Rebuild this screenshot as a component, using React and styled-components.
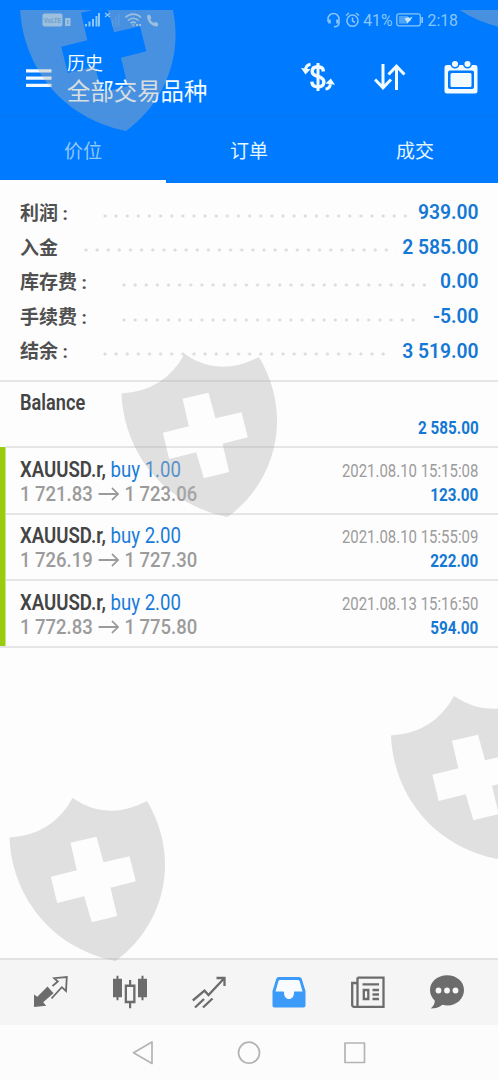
import React from 'react';
import styled, { createGlobalStyle } from 'styled-components';

const GlobalStyle = createGlobalStyle`
  * {
    box-sizing: border-box;
  }
  body {
    margin: 0;
    overflow: hidden;
    background: #fdfdfd;
    font-family: Roboto, 'Noto Sans CJK SC', sans-serif;
  }
`;

const Screen = styled.div`
  position: relative;
  display: flex;
  flex-direction: column;
  width: 498px;
  height: 1080px;
  overflow: hidden;
  background: #fdfdfd;
`;

const Header = styled.header`
  height: 183px;
  background: #007aff;
  color: #f2fbff;
`;

const StatusBar = styled.div`
  display: flex;
  justify-content: space-between;
  height: 38px;
  padding: 10px 40px 0 42px;
  color: #8ac6f7;
`;

const StatusGroup = styled.div`
  display: flex;
  align-items: center;
  height: 20px;
  gap: ${props => props.gap};
`;

const StatusText = styled.span`
  font-size: 15.8px;
  line-height: 21px;
`;

const Toolbar = styled.div`
  display: flex;
  align-items: center;
  height: 79px;
  padding: 3px 20px 0 26px;
  border-bottom: 1px solid #0874ee;
`;

const Titles = styled.div`
  flex: 1;
  margin-left: 15px;
`;

const Title = styled.div`
  height: 26px;
  font-size: 18px;
  line-height: 26px;
`;

const Subtitle = styled.div`
  height: 30px;
  font-size: 23.4px;
  line-height: 31px;
`;

const Actions = styled.div`
  display: flex;
  align-items: center;
  gap: 38.5px;
  padding-bottom: 3px;
`;

const Tabs = styled.nav`
  display: flex;
  height: 66px;
`;

const Tab = styled.div`
  flex: 1;
  padding-top: 4px;
  border-bottom: 3px solid ${props => (props.on ? '#fff' : 'transparent')};
  color: ${props => (props.on ? '#8fc6fb' : '#e4f6ff')};
  font-size: 19px;
  line-height: 62px;
  text-align: center;
`;

const Summary = styled.section`
  height: 196.5px;
  padding: 12.5px 19.5px 0 20px;
`;

const SummaryRow = styled.div`
  display: flex;
  align-items: center;
  height: 34.6px;
  font-size: 19.3px;
`;

const Label = styled.span`
  margin-right: 26px;
  color: #505050;
  font-family: 'Noto Sans CJK SC', sans-serif;
  font-size: 19px;
  font-weight: 700;
  line-height: 34px;
`;

const Colon = styled.span`
  display: inline-block;
  width: 19px;
  padding-left: 4.5px;
  font-family: Roboto, sans-serif;
`;

const Leader = styled.span`
  width: ${props => props.dots * 11.13}px;
  height: 4px;
  margin-top: 6px;
  background: radial-gradient(circle at 2px 2px, #dcdcdc 1.1px, transparent 2px);
  background-size: 11.13px 4px;
`;

const Value = styled.span`
  flex: 1;
  color: #1478d4;
  font-weight: 600;
  text-align: right;
  white-space: nowrap;
`;

const Deals = styled.section`
  flex: 1;
`;

const Deal = styled.div`
  display: flex;
  justify-content: space-between;
  height: 66.5px;
  padding: 9px 19.5px 0 20px;
  border-top: 2px solid #e5e5e5;
`;

const MarkedDeals = styled.div`
  border-bottom: 2px solid #e5e5e5;
  background: linear-gradient(#99cc0c, #99cc0c) no-repeat 0 1px / 5.5px 100%;

  ${Deal} {
    margin-left: 5.5px;
    padding-left: 14.5px;
  }
`;

const Column = styled.div`
  width: ${props => (props.right ? '160px' : '220px')};
  display: flex;
  flex-direction: column;
  align-items: ${props => (props.right ? 'flex-end' : 'flex-start')};
  padding-top: ${props => (props.right ? '1.5px' : '0.5px')};
`;

const Condensed = styled.div`
  height: ${props => props.height || 24}px;
  line-height: ${props => props.height || 24}px;
  white-space: nowrap;
  transform: scaleX(${props => props.squeeze || 0.87});
  transform-origin: ${props => (props.right ? 'right' : 'left')} center;
`;

const Symbol = styled(Condensed)`
  color: #444;
  font-size: 21.5px;
  font-weight: 600;
`;

const Side = styled.span`
  color: #197bd9;
  font-weight: 400;
`;

const Prices = styled(Condensed)`
  display: flex;
  align-items: center;
  gap: 6px;
  color: #9b9b9b;
  font-size: 21px;
  font-weight: 500;
`;

const Time = styled(Condensed)`
  color: #9c9c9c;
  font-size: 18px;
`;

const Profit = styled(Condensed)`
  color: #1478d4;
  font-size: 17.5px;
  font-weight: 700;
`;

const BottomNav = styled.nav`
  display: flex;
  height: 67px;
  padding: 0 11.5px 2px;
  border-top: 2px solid #e2e2e2;
  background: #f5f5f5;
`;

const NavItem = styled.div`
  flex: 1;
  display: flex;
  align-items: center;
  justify-content: center;
  color: ${props => (props.on ? '#3c9bf8' : '#6c6c6c')};
`;

const SystemBar = styled.div`
  display: flex;
  justify-content: center;
  gap: 81px;
  height: 55px;
  padding-top: 15px;
  background: #fcfcfc;
`;

const Watermark = styled.svg`
  position: absolute;
  top: 10px;
  left: 0;
  pointer-events: none;
`;

const totals = [
  { label: '利润', colon: true, dots: 28, value: '939.00' },
  { label: '入金', colon: false, dots: 28, value: '2 585.00' },
  { label: '库存费', colon: true, dots: 28, value: '0.00' },
  { label: '手续费', colon: true, dots: 27, value: '-5.00' },
  { label: '结余', colon: true, dots: 26, value: '3 519.00' },
];

const deals = [
  { id: 1, volume: '1.00', open: '1 721.83', close: '1 723.06', time: '2021.08.10 15:15:08', profit: '123.00' },
  { id: 2, volume: '2.00', open: '1 726.19', close: '1 727.30', time: '2021.08.10 15:55:09', profit: '222.00' },
  { id: 3, volume: '2.00', open: '1 772.83', close: '1 775.80', time: '2021.08.13 15:16:50', profit: '594.00' },
];

const shields = [[20, -43], [401, -145], [121.5, 343], [391, 685], [9.5, 787]];

const PhoneSignals = () => (
  <svg width="118" height="20" fill="currentColor">
    <rect x="0.5" y="3.5" width="20" height="13" rx="2" />
    <text x="2" y="13" fontSize="8" fontWeight="700" textLength="17" lengthAdjust="spacingAndGlyphs" fill="#4293e5">VoLTE</text>
    <path d="M23 8h5.500v8H23z" />
    <path d="M25.200 10h1.200v4h-1.200z" fill="#4a94df" />
    <path d="M43 14h2v2.500h-2zM46.500 11.500h2v5h-2zM50 9h2v7.500h-2zM53.500 6h2v10.500h-2zM56 3h2v13.500h-2z" />
    <path d="M63 3l5 4M68 3l-5 4" stroke="currentColor" strokeWidth="1.300" />
    <path d="M70 10h1.500v6.500H70zM73 7h1.500v9.500H73zM76 4h1.500v12.500H76z" opacity="0.2" />
    <g fill="none" stroke="currentColor" strokeWidth="1.700">
      <path d="M83.500 7.500c4.500-4.500 11-4.500 15.500 0M86 10.500c3-3 7.500-3 10.500 0M88.700 13.200c1.500-1.400 3.500-1.400 5 0" />
    </g>
    <path d="M89.500 14.500h3.500l-1.800 2zM94 14h2v2h-2zM97 14h2v2h-2z" />
    <path d="M105 5.500l2.500-1 2 3.300-1.300 1.500c.8 1.800 2 3 3.700 3.800l1.500-1.400 3 2-1 2.800c-5.500.5-10.500-5-10.400-11z" />
  </svg>
);

const Headset = () => (
  <svg width="15" height="16" viewBox="0 0 15 16" fill="none" stroke="currentColor" strokeWidth="1.500">
    <path d="M2 10V7a5.500 5.500 0 0 1 11 0v4c0 2.500-2 3.700-5 3.700" />
    <path d="M3.500 7.500v4M11.500 7.500v4" strokeWidth="2.500" />
  </svg>
);

const Alarm = () => (
  <svg width="15" height="16" viewBox="0 0 15 16" fill="none" stroke="currentColor" strokeWidth="1.500">
    <circle cx="7.500" cy="8.700" r="5.600" />
    <path d="M7.500 5.500v3.500l2.500 1.500M1 3.500L4 1M14 3.500L11 1" />
  </svg>
);

const Battery = () => (
  <svg width="28" height="14" viewBox="0 0 28 14">
    <rect x="0.800" y="0.800" width="23.500" height="12" rx="2" fill="none" stroke="currentColor" strokeWidth="1.300" />
    <rect x="3" y="3" width="9" height="7.600" fill="currentColor" opacity="0.550" />
    <path d="M25.300 4h1.700v6h-1.700z" fill="currentColor" />
    <path d="M8.500 5.500l4-1.500 1 1.200L16.500 3.500l-2 4-3.500 3-.5-2.200z" fill="#c8e7fb" />
  </svg>
);

const MenuIcon = () => (
  <svg width="26" height="20" fill="currentColor">
    <path d="M0 0.300h25.500v3.200H0zM0 7.500h25.500v3.200H0zM0 14.700h25.500v3.200H0z" />
  </svg>
);

const CurrencyIcon = () => (
  <svg width="34" height="30" viewBox="0 0 34 30" fill="none" stroke="currentColor">
    <path d="M22.500 9.500c-.3-3.200-2.400-4.800-5.600-4.800-3.500 0-5.700 1.800-5.700 4.700 0 6.500 11.700 3.600 11.700 10.500 0 3.200-2.500 5-6 5-3.600 0-5.900-1.900-6.100-5.200" strokeWidth="3.400" />
    <path d="M17 1v28" strokeWidth="3" />
    <path d="M9.500 2.300C6.500 2.800 5 4.500 4.600 7M24.500 27c3-.4 4.500-2 4.900-4.800" strokeWidth="3" />
    <path d="M0 6l9.500 1.200-5 5.300zM34 22.800l-9.500-1.200 5.300-5z" fill="currentColor" stroke="none" />
  </svg>
);

const SortIcon = () => (
  <svg width="32" height="28" viewBox="0 0 32 28" fill="none" stroke="currentColor" strokeWidth="3">
    <path d="M9 1v24M1 16.500l8 8.300 8-8.300M22.500 27V3M14.500 11.500l8-8.300 8 8.300" />
  </svg>
);

const CalendarIcon = () => (
  <svg width="34" height="34" viewBox="0 0 34 34" fill="currentColor">
    <path fillRule="evenodd" d="M3 5h28a2.500 2.500 0 0 1 2.500 2.500V31A2.500 2.500 0 0 1 31 33.500H3A2.500 2.500 0 0 1 .5 31V7.500A2.500 2.500 0 0 1 3 5zM6 10.500a2 2 0 0 0-2 2v14.500a2 2 0 0 0 2 2h22a2 2 0 0 0 2-2V12.500a2 2 0 0 0-2-2z" />
    <rect x="6.500" y="13" width="21" height="14" rx="1.500" />
    <g stroke="#007aff" strokeWidth="1.500">
      <circle cx="11" cy="4" r="3.800" />
      <circle cx="23.500" cy="4" r="3.800" />
    </g>
  </svg>
);

const QuotesIcon = () => (
  <svg width="34" height="34" viewBox="0 0 34 34" fill="none" stroke="currentColor" strokeWidth="1.800">
    <path d="M0 19.500l3.300 2.300 10.200-10.300 6 6.700-10.300 9 3 3.600L0 32z" fill="currentColor" stroke="none" />
    <path d="M18.500 11l5.300-4.500-3.600-3.300L32.800 2l-.8 14-4.200-3.800L17.500 23.500" />
  </svg>
);

const CandlesIcon = () => (
  <svg width="34" height="34" viewBox="0 0 34 34" fill="currentColor">
    <path d="M3.500.8h2v3H9v18.500H5.500v3h-2v-3H0V3.800h3.500zM28.500.8h2v3H34v18.500h-3.500v3h-2v-3H25V3.800h3.500z" />
    <path fillRule="evenodd" d="M16 5h2.200v4.500h4.300v18.800h-4.300v5H16v-5h-4.300V9.500H16zM14 12v13.800h6.200V12z" />
  </svg>
);

const TrendIcon = () => (
  <svg width="34" height="34" viewBox="0 0 34 34" fill="none" stroke="currentColor" strokeWidth="2.300">
    <path d="M.8 25.500l11.700-9.800 4 4.300L32 3.500M24.500 3h8v8M3 32.500l9-8.500M11 32.500l9.500-9" />
  </svg>
);

const InboxIcon = () => (
  <svg width="34" height="34" viewBox="0 0 34 34">
    <path d="M7 2h20c1.500 0 2.300.7 2.800 2L33.500 16v14.500a2 2 0 0 1-2 2h-29a2 2 0 0 1-2-2V16L4.200 4C4.700 2.700 5.500 2 7 2z" fill="currentColor" />
    <path d="M8 5h18a1.500 1.500 0 0 1 1.500 1l3 10.500H23c-.8 0-1 .5-1 1.200 0 3.700-2 6.300-5 6.300s-5-2.600-5-6.300c0-.7-.2-1.200-1-1.200H3.500L6.500 6A1.500 1.500 0 0 1 8 5z" fill="#f8fbff" />
  </svg>
);

const NewsIcon = () => (
  <svg width="34" height="34" viewBox="0 0 34 34" fill="none" stroke="currentColor" strokeWidth="2.300">
    <path d="M6.500 2.600h26v29.200H3a1.800 1.800 0 0 1-1.800-1.800V8h4.500M6.500 2.600v29" />
    <path d="M11.500 9.300h16.500M21.500 15h6.500M21.500 19.500h6.500M21.500 24h6.500M12.800 15h4.500v9h-4.500z" />
  </svg>
);

const ChatIcon = () => (
  <svg width="34" height="34" viewBox="0 0 34 34">
    <path d="M17 .2c9.500 0 17 6.300 17 14.700S26.800 30.400 17.500 30.400c-1.800 0-3.500-.2-5-.6C9 32.700 5 33.400.8 33.400c2.800-2.700 4-4.800 4-7.700C1.700 22.900 0 19.400 0 15.100 0 6.600 7.500.2 17 .2z" fill="currentColor" />
    <g fill="#f8f8f8">
      <circle cx="8.500" cy="15.500" r="2.900" />
      <circle cx="17" cy="15.500" r="2.900" />
      <circle cx="25.500" cy="15.500" r="2.900" />
    </g>
  </svg>
);

const navItems = [QuotesIcon, CandlesIcon, TrendIcon, InboxIcon, NewsIcon, ChatIcon];

const PriceArrow = () => (
  <svg width="24" height="14" viewBox="0 0 24 14" fill="none" stroke="currentColor" strokeWidth="1.800">
    <path d="M0 7h22.500M15.500 1l7 6-7 6" />
  </svg>
);

const SystemIcon = ({ children }) => (
  <svg width="24" height="26" viewBox="0 0 24 26" fill="none" stroke="#b4b4b4" strokeWidth="1.700" strokeLinejoin="round">
    {children}
  </svg>
);

const App = () => {
  return (
    <>
      <GlobalStyle />
      <Screen>
        <Header>
          <StatusBar>
            <StatusGroup>
              <PhoneSignals />
            </StatusGroup>
            <StatusGroup gap="3.5px">
              <Headset />
              <Alarm />
              <StatusText>41%</StatusText>
              <Battery />
              <StatusText>2:18</StatusText>
            </StatusGroup>
          </StatusBar>
          <Toolbar>
            <MenuIcon />
            <Titles>
              <Title>历史</Title>
              <Subtitle>全部交易品种</Subtitle>
            </Titles>
            <Actions>
              <CurrencyIcon />
              <SortIcon />
              <CalendarIcon />
            </Actions>
          </Toolbar>
          <Tabs>
            <Tab on>价位</Tab>
            <Tab>订单</Tab>
            <Tab>成交</Tab>
          </Tabs>
        </Header>
        <Summary>
          {totals.map(row => (
            <SummaryRow key={row.label}>
              <Label>
                {row.label}
                {row.colon && <Colon>:</Colon>}
              </Label>
              <Leader dots={row.dots} />
              <Value>{row.value}</Value>
            </SummaryRow>
          ))}
        </Summary>
        <Deals>
          <Deal>
            <Column>
              <Symbol squeeze={0.845}>Balance</Symbol>
            </Column>
            <Column right>
              <Time right />
              <Profit right>2 585.00</Profit>
            </Column>
          </Deal>
          <MarkedDeals>
            {deals.map(deal => (
              <Deal key={deal.id}>
                <Column>
                  <Symbol squeeze={0.865}>
                    XAUUSD.r, <Side>buy {deal.volume}</Side>
                  </Symbol>
                  <Prices squeeze={0.88}>
                    <span>{deal.open}</span>
                    <PriceArrow />
                    <span>{deal.close}</span>
                  </Prices>
                </Column>
                <Column right>
                  <Time right squeeze={0.83}>{deal.time}</Time>
                  <Profit right>{deal.profit}</Profit>
                </Column>
              </Deal>
            ))}
          </MarkedDeals>
        </Deals>
        <BottomNav>
          {navItems.map((Icon, i) => (
            <NavItem key={i} on={i === 3}>
              <Icon />
            </NavItem>
          ))}
        </BottomNav>
        <SystemBar>
          <SystemIcon>
            <path d="M20 2v21.500L1.500 12.700z" />
          </SystemIcon>
          <SystemIcon>
            <circle cx="12" cy="12.700" r="10.500" />
          </SystemIcon>
          <SystemIcon>
            <rect x="3" y="3" width="19.500" height="19.500" />
          </SystemIcon>
        </SystemBar>
        <Watermark width="498" height="1070" fill="rgba(180, 180, 180, 0.4)">
          {shields.map(([x, y]) => (
            <path
              key={`${x}-${y}`}
              transform={`translate(${x} ${y})`}
              fillRule="evenodd"
              d="M63 1Q98 25 137.500 4C174 66 151 132 106 164C38 150 2 95 0 40.500Q43 38 63 1zM61 45.700L87 39.700 94 65.300 120 59.300 126.300 84.300 101 90.700 107.700 119 82.300 125.300 74.700 99.300 47.700 106 41.300 79.700 67.300 73.300z"
            />
          ))}
        </Watermark>
      </Screen>
    </>
  );
};

export default App;
